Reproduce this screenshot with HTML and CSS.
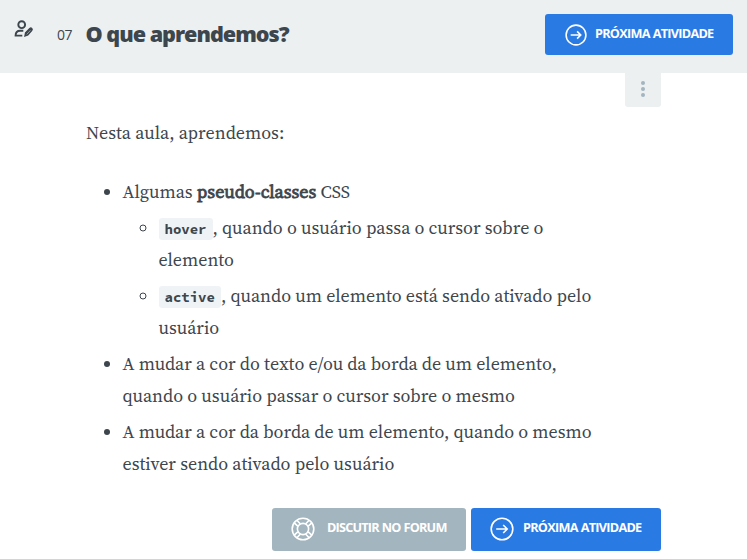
FILE: index.html
```html
<!DOCTYPE html>
<html lang="pt-BR">
<head>
<meta charset="utf-8">
<title>O que aprendemos?</title>
<link rel="stylesheet" href="styles.css">
</head>
<body>
<header class="task-header">
  <svg class="task-icon" width="20" height="18" viewBox="0 0 20 18" fill="none" stroke="#3d464d" stroke-width="1.9">
    <circle cx="7.7" cy="4.7" r="3.4"/>
    <path d="M9.3 10.7H6.2C3.3 10.7 1.6 12.6 1.6 15.6H8.3"/>
    <path d="M11 16l.6-3.2 4.2-4.3c1.3-1.1 3.1.5 2 1.9l-4 4.5z" fill="#3d464d" stroke-width="1.4"/>
    <path d="M12.7 14.4l3.7-4" stroke="#9aa1a5" stroke-width=".9"/>
  </svg>
  <h1 class="task-title"><span class="task-number">07</span><span class="task-name">O que aprendemos?</span></h1>
  <a class="button button-next">
    <svg width="22" height="22" viewBox="0 0 24 24" fill="none" stroke="#fff" stroke-width="1.7"><circle cx="12" cy="12" r="10.8"/><path d="M6.2 12H17M13.2 8l4 4-4 4"/></svg>
    <span>PRÓXIMA ATIVIDADE</span>
  </a>
</header>
<main class="content">
  <div class="menu-row"><button class="menu" aria-label="Menu"><i></i><i></i><i></i></button></div>
  <p class="intro">Nesta aula, aprendemos:</p>
  <ul class="topics">
    <li>Algumas <strong>pseudo-classes</strong> CSS
      <ul>
        <li><code>hover</code>, quando o usuário passa o cursor sobre o<br>elemento</li>
        <li><code>active</code>, quando um elemento está sendo ativado pelo<br>usuário</li>
      </ul>
    </li>
    <li>A mudar a cor do texto e/ou da borda de um elemento,<br>quando o usuário passar o cursor sobre o mesmo</li>
    <li>A mudar a cor da borda de um elemento, quando o mesmo<br>estiver sendo ativado pelo usuário</li>
  </ul>
  <div class="actions">
    <a class="button button-forum">
      <svg width="24" height="24" viewBox="0 0 24 24" fill="none" stroke="#fff" stroke-width="1.6"><circle cx="12" cy="12" r="10.8"/><circle cx="12" cy="12" r="5.6"/><path d="M6.8 9.2L3.2 5.9M9.2 6.8L5.9 3.2M14.8 6.8l3.3-3.6M17.2 9.2l3.6-3.3M17.2 14.8l3.6 3.3M14.8 17.2l3.3 3.6M9.2 17.2l-3.3 3.6M6.8 14.8l-3.6 3.3"/></svg>
      <span>DISCUTIR NO FORUM</span>
    </a>
    <a class="button button-next-large">
      <svg width="24" height="24" viewBox="0 0 24 24" fill="none" stroke="#fff" stroke-width="1.6"><circle cx="12" cy="12" r="10.8"/><path d="M6.2 12H17M13.2 8l4 4-4 4"/></svg>
      <span>PRÓXIMA ATIVIDADE</span>
    </a>
  </div>
</main>
</body>
</html>
```
FILE: styles.css
```css
* { box-sizing: border-box; }
body {
  margin: 0;
  background: #fff;
  color: #3d464d;
  font-family: "Source Serif Pro", "Source Serif 4", "Liberation Serif", serif;
}
.task-header {
  display: flex;
  align-items: flex-start;
  height: 73px;
  padding: 14px 14px 0 14px;
  background: #ecf0f1;
  font-family: "Open Sans", sans-serif;
}
.task-icon { margin-top: 6px; }
.task-title {
  display: flex;
  align-items: center;
  flex: 1;
  margin: -1px 0 0 23px;
  line-height: 40px;
}
.task-number { width: 28.5px; padding-top: 2px; font-size: 14px; font-weight: 400; letter-spacing: -0.5px; }
.task-name { font-size: 21.6px; font-weight: 800; letter-spacing: -1px; }
.button {
  display: flex;
  align-items: center;
  border-radius: 3px;
  background: #2a7ae4;
  color: #fff;
  font: 700 12.7px "Open Sans", sans-serif;
  letter-spacing: -0.8px;
  white-space: nowrap;
}
.button span { position: relative; top: -2px; word-spacing: 0.5px; }
.button-next { width: 188px; height: 41px; padding-left: 20px; gap: 8px; }
.button-next span, .button-next-large span { letter-spacing: -0.74px; }
.content { width: 575px; margin-left: 86px; }
.menu-row { display: flex; justify-content: flex-end; }
.menu {
  display: flex;
  flex-direction: column;
  align-items: center;
  width: 36px;
  height: 34px;
  padding: 8px 0 0;
  gap: 2px;
  border: 0;
  border-radius: 0 0 3px 3px;
  background: #ecf0f1;
}
.menu i { width: 4px; height: 4px; border-radius: 50%; background: #a3b5bf; }
.intro, .topics { font-size: 18px; line-height: 31.5px; }
.intro { margin: 10px 0 27.4px; }
.topics { margin: 0; padding-left: 36.5px; }
.topics ul { margin: 5px 0 0; padding-left: 36px; }
.topics li + li { margin-top: 5px; }
strong { font-weight: 400; -webkit-text-stroke: 0.8px currentColor; }
code {
  padding: 2px 6px;
  border-radius: 3px;
  background: #f0f3f5;
  font: 700 14px/16px "Source Code Pro", "DejaVu Sans Mono", monospace;
}
.actions { display: flex; gap: 5px; margin: 28.6px 0 0 186px; }
.button-forum { width: 194px; height: 43px; padding-left: 19px; gap: 12px; background: #a3b5bf; }
.button-next-large { width: 190px; height: 43px; padding-left: 19px; gap: 9px; }
```
